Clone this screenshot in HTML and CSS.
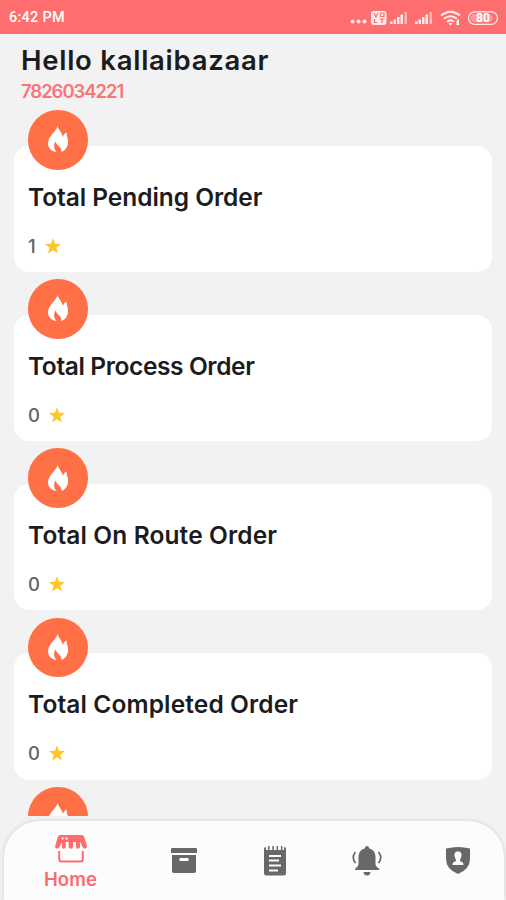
FILE: index.html
```html
<!DOCTYPE html>
<html lang="en">
<head>
<meta charset="utf-8">
<meta name="viewport" content="width=device-width, initial-scale=1">
<title>Orders dashboard</title>
<link rel="stylesheet" href="styles.css">
</head>
<body>
<svg width="0" height="0" class="defs">
  <symbol id="flame" viewBox="0 0 20 27"><path d="M9.500 0C9 5 0 10 0 17.500C0 22 3.500 25.500 8.600 26C5.500 23 5.500 18.500 7.500 15.500C8.500 19.500 13.500 20.500 13.500 26C18 24 20 20.500 20 16C20 12.500 18.800 10.500 18.500 6.500C16.500 7.500 15.500 9 15 11C14 6.500 10.500 4 9.500 0Z"/></symbol>
  <symbol id="star" viewBox="0 0 16 16"><path d="M8 .3L10 5.700L16 6L11.300 9.700L12.900 15.500L8 12.200L3.100 15.500L4.700 9.700L0 6L6 5.700Z"/></symbol>
</svg>
<div class="screen">
  <header class="status">
    <span class="time">6:42 PM</span>
    <svg class="indicators" viewBox="0 0 150 20" width="150" height="20">
      <g fill="#fff" fill-opacity=".88">
        <circle cx="2.500" cy="14.500" r="2"/><circle cx="8.500" cy="14.500" r="2"/><circle cx="14.500" cy="14.500" r="2"/>
        <rect x="21" y="4" width="15.500" height="14" rx="3"/>
        <path d="M40 17v-2.500h2.500V17zM43.500 17v-4.500H46V17zM47 17v-7h2.500v7zM50.500 17V7.500H53V17zM65 17v-2.500h2.500V17zM68.500 17v-4.500H71V17zM72 17v-7h2.500v7zM75.500 17V7.500H78V17z"/>
        <path fill-opacity=".5" d="M54.500 17V5H57v12zM79.500 17V5H82v12z"/>
      </g>
      <path d="M24 6l2 4 2-4M30.500 6H34v3.500h-3.500zM24.500 12v3.500h3M29.500 12h5M32 12v4" fill="none" stroke="#ff6e6e" stroke-width="1.200"/>
      <g fill="none" stroke="#fff" stroke-width="2" opacity=".88">
        <path d="M91 8.500Q100.500 1 110 8.500M94 11.800Q100.500 6.800 107 11.800M97 14.700Q100.500 12 104 14.700"/>
        <rect x="118.500" y="4.800" width="29" height="12.500" rx="6.200" stroke-width="1.300"/>
      </g>
      <path d="M98.500 16h4l-2 2.500zM106.500 14l2.500-2v6h-2.500z" fill="#fff"/>
      <rect x="120.500" y="6.800" width="22" height="8.500" rx="4.200" fill="#fff" opacity=".3"/>
      <text x="133" y="15" text-anchor="middle" class="battery">80</text>
    </svg>
  </header>
  <main class="content">
    <h1 class="hello">Hello kallaibazaar</h1>
    <p class="phone">7826034221</p>
    <section class="item">
      <div class="card"><h2 class="title pending">Total Pending Order</h2><p class="count">1 <svg class="star"><use href="#star"/></svg></p></div>
      <div class="badge"><svg class="flame"><use href="#flame"/></svg></div>
    </section>
    <section class="item">
      <div class="card"><h2 class="title process">Total Process Order</h2><p class="count">0 <svg class="star"><use href="#star"/></svg></p></div>
      <div class="badge"><svg class="flame"><use href="#flame"/></svg></div>
    </section>
    <section class="item">
      <div class="card"><h2 class="title route">Total On Route Order</h2><p class="count">0 <svg class="star"><use href="#star"/></svg></p></div>
      <div class="badge"><svg class="flame"><use href="#flame"/></svg></div>
    </section>
    <section class="item">
      <div class="card"><h2 class="title completed">Total Completed Order</h2><p class="count">0 <svg class="star"><use href="#star"/></svg></p></div>
      <div class="badge"><svg class="flame"><use href="#flame"/></svg></div>
    </section>
    <section class="item">
      <div class="badge"><svg class="flame"><use href="#flame"/></svg></div>
    </section>
  </main>
  <nav class="tabs">
    <a class="tab home">
      <svg viewBox="0 0 32 28" width="32" height="28"><path fill="#ff6b6f" d="M5 0h22q1.500 0 2 1.500L32 11q.2 2-1.500 2.500-2 .3-3-1.500L25 6.500V12q-.3 1.800-2 1.800T21 12V7h-3v5q-.3 1.800-2.200 1.800T13.600 12V7h-2.800v5q-.4 1.800-2.100 1.800T7 12V7l-2.500 5Q3.500 14 1.500 13.500-.2 13 .2 11L3 1.500Q3.500 0 5 0Z"/><path d="M6.500 3.500h2M10.500 3.500h2" stroke="#fff" stroke-width="2"/><path d="M4.200 16v8q0 2.500 2.500 2.500h18.600q2.500 0 2.500-2.500v-8" fill="none" stroke="#ff6b6f" stroke-width="2"/></svg>
      <span class="label">Home</span>
    </a>
    <a class="tab"><svg viewBox="0 0 26 26" width="26" height="26"><path d="M0 1q0-1 1-1h24q1 0 1 1v4H0zM1 7h24v16q0 2-2 2H3q-2 0-2-2z"/><rect class="cut" x="8.500" y="10" width="9" height="3" rx=".5"/></svg></a>
    <a class="tab"><svg viewBox="0 0 22 30" width="22" height="30"><path d="M0 3q0-2 2-2V4h2V0h1.500v4h2.800V0h1.500v4h2.800V0h1.500v4h2.800V0h1.500v4H20V1q2 0 2 2v24q0 2.500-2.500 2.500h-17Q0 29.500 0 27z"/><path class="line" d="M5 10h12M5 14.500h10M5 19.500h12M5 24.500h9"/></svg></a>
    <a class="tab"><svg viewBox="0 0 30 30" width="30" height="30"><path d="M15 0q2 0 2 2.200Q23.500 4 23.500 11v7q0 2.500 3.500 4.500Q28 24 26 24H4q-2 0-.5-1.500Q6.500 20.500 6.500 18v-7q0-7 6.500-8.800Q13 0 15 0M11.500 26h7q-.5 3.500-3.500 3.500T11.500 26"/><path d="M3.500 6q-4.500 5.500 0 11M26.500 6q4.500 5.500 0 11" fill="none" stroke="#686868" stroke-width="1.700"/></svg></a>
    <a class="tab"><svg viewBox="0 0 24 27" width="24" height="27"><path d="M0 1.500Q12-1.500 24 1.500V12q0 10-12 15Q0 22 0 12z"/><path class="cut" d="M12 4.500c3 0 3.800 2 3.500 4.500-.3 2-1.500 3-1.500 4.500 0 1.200 3.500 1 3.500 4.500h-11c0-3.500 3.500-3.300 3.500-4.500 0-1.500-1.200-2.500-1.500-4.500-.3-2.500.5-4.500 3.500-4.500z"/></svg></a>
  </nav>
</div>
</body>
</html>
```
FILE: styles.css
```css
* { box-sizing: border-box; }
body { margin: 0; background: #f2f2f2; font-family: Inter, "Liberation Sans", sans-serif; color: #1c1c1f; }
h1, h2, p { margin: 0; }
.defs { position: absolute; }
.screen { height: 900px; display: flex; flex-direction: column; overflow: hidden; }
.status { height: 34px; flex: none; background: #ff6e6e; padding: 0 6px 0 9px; display: flex; align-items: center; justify-content: space-between; color: #fff; }
.time { font: 500 14.5px/34px Roboto, sans-serif; letter-spacing: .25px; padding-top: 2px; }
.battery { font: 700 12px Roboto, sans-serif; fill: #fff; }
.content { height: 782px; flex: none; overflow: hidden; }
.hello { font-size: 27.5px; font-weight: 600; line-height: 36px; letter-spacing: .74px; margin: 8px 0 0 21px; white-space: nowrap; }
.phone { font-size: 18.5px; font-weight: 600; line-height: 24px; letter-spacing: -1.05px; color: #fa7478; margin: 1px 0 7px 21px; }
.item { position: relative; height: 169.2px; padding: 35.5px 14px 0; }
.card { height: 126.5px; background: #fff; border-radius: 15px; padding: 35px 14px 0; }
.title { font-size: 24.5px; font-weight: 600; line-height: 32px; white-space: nowrap; }
.pending { letter-spacing: -.05px; }
.process { letter-spacing: -.39px; }
.route { letter-spacing: .12px; }
.completed { letter-spacing: .12px; }
.count { display: flex; align-items: center; gap: 9.500px; margin-top: 21px; font-size: 18.5px; font-weight: 500; line-height: 24px; color: #636365; }
.star { width: 16px; height: 16px; fill: #fdc727; }
.badge { position: absolute; left: 28px; top: 0; width: 59.500px; height: 59.500px; border-radius: 50%; background: #ff7047; display: flex; align-items: center; justify-content: center; }
.flame { width: 20px; height: 27px; fill: #fff; }
.tabs { flex: none; height: 79px; margin: 5px 2px 0 4px; padding-left: 20px; border-radius: 36px 36px 0 0; background: #fcfcfc; box-shadow: 0 0 5px rgba(0, 0, 0, .14); display: grid; grid-template-columns: 93px 133px 50px 133px 50px; align-items: center; }
.tab { display: flex; flex-direction: column; align-items: center; fill: #686868; }
.home { padding-top: 5px; }
.label { font-size: 18.5px; font-weight: 600; line-height: 24px; letter-spacing: .1px; color: #fa6b70; margin-top: 4px; }
.cut { fill: #fcfcfc; }
.line { stroke: #fcfcfc; stroke-width: 2; fill: none; }
```
